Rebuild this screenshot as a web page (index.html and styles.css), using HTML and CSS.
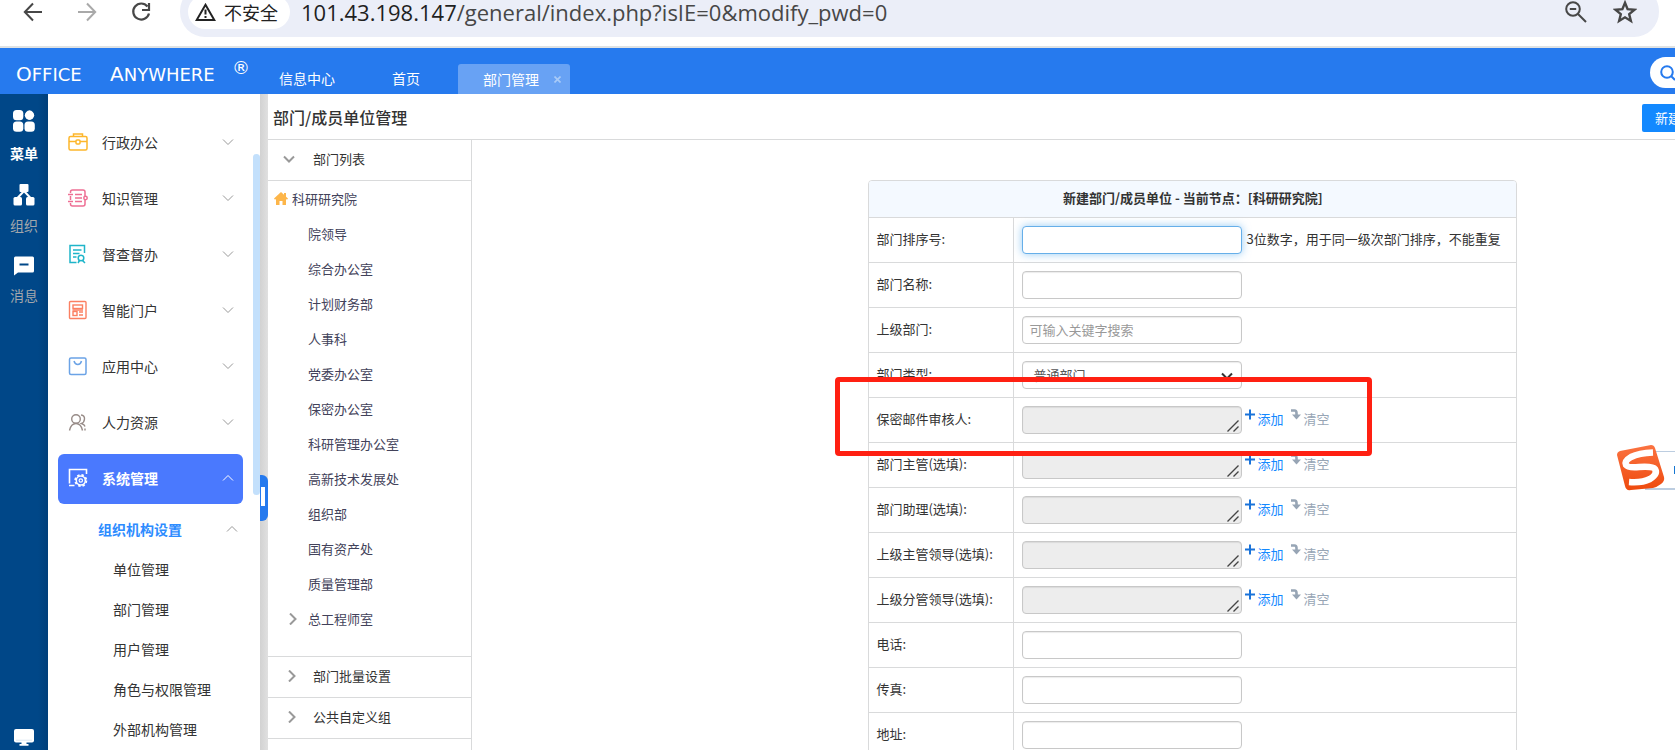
FILE: index.html
```html
<!DOCTYPE html>
<html lang="zh-CN">
<head>
<meta charset="utf-8">
<title>部门/成员单位管理</title>
<link rel="stylesheet" href="styles.css">
</head>
<body>
<svg class="defs" width="0" height="0" aria-hidden="true">
  <symbol id="down" viewBox="0 0 12 12"><path d="M1 3.5 6 8.5 11 3.5" fill="none" stroke="currentColor"/></symbol>
  <symbol id="up" viewBox="0 0 12 12"><path d="M1 8.500 6 3.500 11 8.500" fill="none" stroke="currentColor"/></symbol>
  <symbol id="right" viewBox="0 0 12 12"><path d="M3 .5 8.500 6 3 11.500" fill="none" stroke="currentColor"/></symbol>
  <symbol id="grip" viewBox="0 0 12 12"><path d="M.5 11.500 11.500 .5M6.500 11.500 11.500 6.500" fill="none" stroke="#444" stroke-width="1.400"/></symbol>
  <symbol id="plus" viewBox="0 0 10 10"><path d="M5 0V10M0 5H10" stroke="#1a73d9" stroke-width="2" fill="none"/></symbol>
  <symbol id="clear" viewBox="0 0 10 11"><path d="M0 1.500H3.500Q5.500 1.500 5.500 4V6" stroke="#97a5b5" stroke-width="2.600" fill="none"/><path d="M1 5.500H10L5.500 10.500Z" fill="#97a5b5"/></symbol>
</svg>

<div class="window">
  <div class="toolbar">
    <button class="nav" aria-label="后退"><svg width="20" height="20" viewBox="0 0 20 20"><path d="M19 10H2M10 1.500 1.800 10 10 18.500" fill="none" stroke="#474747" stroke-width="2"/></svg></button>
    <button class="nav" aria-label="前进"><svg width="20" height="20" viewBox="0 0 20 20"><path d="M1 10H18M10 1.500 18.200 10 10 18.500" fill="none" stroke="#a9a9a9" stroke-width="2"/></svg></button>
    <button class="nav" aria-label="刷新"><svg width="20" height="20" viewBox="0 0 20 20"><path d="M16.500 4.500A8 8 0 1 0 18 11.500M18 1V8H11" fill="none" stroke="#474747" stroke-width="2.200"/></svg></button>
    <div class="omnibox">
      <button class="chip"><svg width="21" height="18" viewBox="0 0 21 18"><path d="M10.500 1.800 19.300 17H1.700Z" fill="none" stroke="#222" stroke-width="2"/><path d="M10.500 6.500V11.500M10.500 13V15" stroke="#222" stroke-width="2"/></svg>不安全</button>
      <span class="url"><b>101.43.198.147</b>/general/index.php?isIE=0&amp;modify_pwd=0</span>
      <button class="tool" aria-label="缩小"><svg width="22" height="22" viewBox="0 0 22 22"><circle cx="8" cy="8" r="6.800" fill="none" stroke="#474747" stroke-width="2"/><path d="M4.800 8H11.200M13 13 21 21" stroke="#474747" stroke-width="2"/></svg></button>
      <button class="tool" aria-label="收藏"><svg width="24" height="24" viewBox="0 0 24 24"><path d="M12 2.800 14.600 9.200 21.500 9.700 16.200 14.200 17.900 21 12 17.300 6.100 21 7.800 14.200 2.500 9.700 9.400 9.200Z" fill="none" stroke="#474747" stroke-width="2.400"/></svg></button>
    </div>
  </div>

  <header class="header">
    <div class="logo"><span class="word"><span class="cap">O</span>FFICE</span><span class="word"><span class="cap">A</span>NYWHERE</span><span class="reg">®</span></div>
    <nav class="tabs">
      <a class="tab" href="#">信息中心</a>
      <a class="tab" href="#">首页</a>
      <a class="tab current" href="#">部门管理<svg class="close" width="7" height="7" viewBox="0 0 7 7"><path d="M.5 .5 6.500 6.500M6.500 .5 .5 6.500" stroke="#a9cbf8" stroke-width="1.600"/></svg></a>
    </nav>
    <button class="search" aria-label="搜索"><svg width="16" height="16" viewBox="0 0 16 16"><circle cx="7" cy="7" r="5.800" fill="none" stroke="#267aee" stroke-width="2"/><path d="M11 11 15 15" stroke="#267aee" stroke-width="2"/></svg></button>
  </header>

  <div class="body">
    <nav class="rail">
      <a class="rail-item on" href="#"><svg width="22" height="22" viewBox="0 0 22 22" fill="#fff"><rect width="10.300" height="10.300" rx="3.500"/><rect x="12.700" y="1.400" width="7.600" height="7.600" rx="2" transform="rotate(45 16.500 5.200)"/><circle cx="16.500" cy="5.200" r="4.600"/><rect y="11.500" width="10.300" height="10.300" rx="3.500"/><rect x="11.500" y="11.500" width="10.300" height="10.300" rx="3.500"/></svg>菜单</a>
      <a class="rail-item" href="#"><svg width="22" height="22" viewBox="0 0 22 22"><path d="M11 7 4.500 14M11 7 17.500 14" stroke="#fff" stroke-width="2"/><g fill="#fff"><rect x="6.500" width="9" height="8" rx="1"/><rect x=".5" y="13" width="8.500" height="8.500" rx="1.500"/><rect x="13" y="13" width="8.500" height="8.500" rx="1.500"/></g></svg>组织</a>
      <a class="rail-item" href="#"><svg width="22" height="20" viewBox="0 0 22 20"><path d="M2.500 .5H19.500Q21 .5 21 2V15Q21 16.500 19.500 16.500H5L1 19.500V2Q1 .5 2.500 .5Z" fill="#fff"/><path d="M6.500 8.500H15.500" stroke="#004788" stroke-width="2"/></svg>消息</a>
      <a class="rail-item last" href="#" aria-label="桌面"><svg width="20" height="17" viewBox="0 0 20 17" fill="#fff"><rect width="20" height="13.500" rx="2"/><path d="M7.500 13H12.500V15H14.500V16.800H5.500V15H7.500Z"/><path d="M2 11.200H18" stroke="#cfdceb" stroke-width=".7"/></svg></a>
    </nav>

    <nav class="menu">
      <div class="menu-list">
        <a class="menu-item" href="#" aria-label="公文"><svg class="mi" viewBox="0 0 20 20"><circle cx="10" cy="10" r="9" fill="#b978e8"/></svg></a>
        <a class="menu-item" href="#"><svg class="mi" viewBox="0 0 20 20" fill="none" stroke="#fdb62b" stroke-width="1.500"><rect x="1" y="4.500" width="18" height="13.500" rx="1.500"/><path d="M5.500 4.500V2H14.500V4.500M1 9.500H8M12 9.500H19"/><rect x="8" y="8" width="4" height="4" rx="1"/></svg>行政办公<svg class="chev"><use href="#down"/></svg></a>
        <a class="menu-item" href="#"><svg class="mi" viewBox="0 0 20 20" fill="none" stroke="#ee6f94" stroke-width="1.500"><path d="M2.500 5V4Q2.500 2 4.500 2H15Q17 2 17 4V8M17 12V16Q17 18 15 18H4.500Q2.500 18 2.500 16V15M2.500 8V12M0 6.500H5M0 13.500H5M7 6.500H14M7 10H14M7 13.500H14"/><circle cx="17.500" cy="10" r="1.700"/></svg>知识管理<svg class="chev"><use href="#down"/></svg></a>
        <a class="menu-item" href="#"><svg class="mi" viewBox="0 0 20 20" fill="none" stroke="#1fb5c9" stroke-width="1.500"><path d="M16.500 9V1.500H2V18.500H8.500M5 6H13.500M5 9.500H11.500M5 13H8.500"/><circle cx="13" cy="14" r="2.800"/><path d="M11.500 16.500 10 19M14.500 16.500 17 19"/></svg>督查督办<svg class="chev"><use href="#down"/></svg></a>
        <a class="menu-item" href="#"><svg class="mi" viewBox="0 0 20 20" fill="none" stroke="#fb8062" stroke-width="1.400"><rect x="1.500" y="1.500" width="16.500" height="17" rx="1"/><rect x="5" y="5" width="9.500" height="3.500"/><rect x="5" y="11.500" width="4" height="4"/><path d="M4.500 10H15M11 12H15M11 15H15"/></svg>智能门户<svg class="chev"><use href="#down"/></svg></a>
        <a class="menu-item" href="#"><svg class="mi" viewBox="0 0 20 20" fill="none" stroke="#6ba3e6" stroke-width="1.500"><rect x="1.500" y="2" width="16.500" height="16.500" rx="1.500"/><path d="M6 5Q7 8.500 9.800 8.500T13.500 5"/></svg>应用中心<svg class="chev"><use href="#down"/></svg></a>
        <a class="menu-item" href="#"><svg class="mi" viewBox="0 0 20 20" fill="none" stroke="#978b87" stroke-width="1.400"><circle cx="8" cy="7" r="4.300"/><path d="M1.500 18.500Q3 11.500 8 11.500T14.500 18.500M13 3Q16.800 3.500 16.500 7T13.500 11.500Q16.500 12.500 17 14.500M17 16.500V18.500"/></svg>人力资源<svg class="chev"><use href="#down"/></svg></a>
        <a class="menu-item active" href="#"><svg class="mi" viewBox="0 0 20 20" fill="none" stroke="#fff" stroke-width="1.600"><path d="M18.500 6V1.500H1.500V15.500M1 17.500H6.500"/><circle cx="12.800" cy="12.500" r="4.500" stroke-width="1.500"/><circle cx="12.800" cy="12.500" r="5.600" stroke-width="1.800" stroke-dasharray="2.400 2"/><circle cx="12.800" cy="12.500" r="1.700" stroke-width="1.200"/></svg>系统管理<svg class="chev"><use href="#up"/></svg></a>
        <a class="group" href="#">组织机构设置<svg class="chev"><use href="#up"/></svg></a>
        <a class="leaf" href="#">单位管理</a>
        <a class="leaf" href="#">部门管理</a>
        <a class="leaf" href="#">用户管理</a>
        <a class="leaf" href="#">角色与权限管理</a>
        <a class="leaf" href="#">外部机构管理</a>
      </div>
      <div class="thumb"></div>
    </nav>
    <div class="splitter"><button class="handle" aria-label="收起菜单"></button></div>

    <main class="main">
      <div class="titlebar"><h1>部门/成员单位管理</h1><button class="create">新建</button></div>
      <div class="content">
        <aside class="depts">
          <button class="fold"><svg><use href="#down"/></svg>部门列表</button>
          <div class="tree">
            <a class="root" href="#"><svg width="14" height="13" viewBox="0 0 14 13"><path d="M7 0 10 2.800V1H12V4.700L14 6.600 13 7.700 12 6.900V13H8.500V9H5.500V13H2V6.900L1 7.700 0 6.600Z" fill="#fdb64a"/></svg>科研研究院</a>
            <a class="node" href="#">院领导</a>
            <a class="node" href="#">综合办公室</a>
            <a class="node" href="#">计划财务部</a>
            <a class="node" href="#">人事科</a>
            <a class="node" href="#">党委办公室</a>
            <a class="node" href="#">保密办公室</a>
            <a class="node" href="#">科研管理办公室</a>
            <a class="node" href="#">高新技术发展处</a>
            <a class="node" href="#">组织部</a>
            <a class="node" href="#">国有资产处</a>
            <a class="node" href="#">质量管理部</a>
            <a class="node parent" href="#"><svg><use href="#right"/></svg>总工程师室</a>
          </div>
          <button class="fold closed"><svg><use href="#right"/></svg>部门批量设置</button>
          <button class="fold closed"><svg><use href="#right"/></svg>公共自定义组</button>
        </aside>
        <section class="pane">
          <form class="sheet">
            <table class="form">
              <colgroup><col class="names"><col></colgroup>
              <thead><tr><th colspan="2">新建部门/成员单位 - 当前节点：[科研研究院]</th></tr></thead>
              <tbody>
                <tr><td class="label"><label for="f1">部门排序号:</label></td><td><div class="field"><input class="box focus" id="f1" type="text"><span class="hint">3位数字，用于同一级次部门排序，不能重复</span></div></td></tr>
                <tr><td class="label"><label for="f2">部门名称:</label></td><td><div class="field"><input class="box" id="f2" type="text"></div></td></tr>
                <tr><td class="label"><label for="f3">上级部门:</label></td><td><div class="field"><input class="box" id="f3" type="text" placeholder="可输入关键字搜索"></div></td></tr>
                <tr><td class="label"><label for="f4">部门类型:</label></td><td><div class="field"><span class="wrap"><select class="box" id="f4"><option>普通部门</option></select><svg class="caret"><use href="#down"/></svg></span></div></td></tr>
                <tr><td class="label"><label for="f5">保密邮件审核人:</label></td><td><div class="field"><span class="wrap"><textarea class="box" id="f5" rows="1" readonly></textarea><svg class="grip"><use href="#grip"/></svg></span><a class="add" href="#"><svg><use href="#plus"/></svg>添加</a><a class="clear" href="#"><svg><use href="#clear"/></svg>清空</a></div></td></tr>
                <tr><td class="label"><label for="f6">部门主管(选填):</label></td><td><div class="field"><span class="wrap"><textarea class="box" id="f6" rows="1" readonly></textarea><svg class="grip"><use href="#grip"/></svg></span><a class="add" href="#"><svg><use href="#plus"/></svg>添加</a><a class="clear" href="#"><svg><use href="#clear"/></svg>清空</a></div></td></tr>
                <tr><td class="label"><label for="f7">部门助理(选填):</label></td><td><div class="field"><span class="wrap"><textarea class="box" id="f7" rows="1" readonly></textarea><svg class="grip"><use href="#grip"/></svg></span><a class="add" href="#"><svg><use href="#plus"/></svg>添加</a><a class="clear" href="#"><svg><use href="#clear"/></svg>清空</a></div></td></tr>
                <tr><td class="label"><label for="f8">上级主管领导(选填):</label></td><td><div class="field"><span class="wrap"><textarea class="box" id="f8" rows="1" readonly></textarea><svg class="grip"><use href="#grip"/></svg></span><a class="add" href="#"><svg><use href="#plus"/></svg>添加</a><a class="clear" href="#"><svg><use href="#clear"/></svg>清空</a></div></td></tr>
                <tr><td class="label"><label for="f9">上级分管领导(选填):</label></td><td><div class="field"><span class="wrap"><textarea class="box" id="f9" rows="1" readonly></textarea><svg class="grip"><use href="#grip"/></svg></span><a class="add" href="#"><svg><use href="#plus"/></svg>添加</a><a class="clear" href="#"><svg><use href="#clear"/></svg>清空</a></div></td></tr>
                <tr><td class="label"><label for="f10">电话:</label></td><td><div class="field"><input class="box" id="f10" type="text"></div></td></tr>
                <tr><td class="label"><label for="f11">传真:</label></td><td><div class="field"><input class="box" id="f11" type="text"></div></td></tr>
                <tr><td class="label"><label for="f12">地址:</label></td><td><div class="field"><input class="box" id="f12" type="text"></div></td></tr>
              </tbody>
            </table>
            <div class="mark"></div>
          </form>
        </section>
      </div>
    </main>
  </div>

  <div class="ime">
    <div class="ime-bar"></div>
    <svg class="ime-logo" width="48" height="46" viewBox="0 0 48 46"><defs><linearGradient id="g" x1="0" y1="0" x2="0" y2="1"><stop offset="0" stop-color="#fb7341"/><stop offset="1" stop-color="#ee4a0e"/></linearGradient></defs><path d="M3 6 34 0Q37 0 38 3L47 32Q48 36 44 39Q40 42 36 43L14 45Q9 46 8 41L0 10Q0 7 3 6Z" fill="url(#g)"/><path d="M36 7.500Q22 8 14 12Q7 16 9 20Q11 23 22 22Q36 21 38 24Q41 29 33 34Q25 38 12 37" fill="none" stroke="#fff" stroke-width="6.500"/></svg>
  </div>
</div>
</body>
</html>
```
FILE: styles.css
```css
* { box-sizing: border-box; }
html, body { height: 100%; margin: 0; }
body {
  overflow: hidden;
  background: #fff;
  color: #333;
  font: 14px/20px "Noto Sans CJK SC", sans-serif;
}
a { color: inherit; text-decoration: none; }
button { border: 0; padding: 0; background: none; font: inherit; color: inherit; }
svg { display: block; flex: none; }
.defs { position: absolute; }

.window { position: relative; display: flex; flex-direction: column; height: 100vh; overflow: hidden; }

/* browser toolbar */
.toolbar {
  display: flex;
  align-items: flex-start;
  height: 48px;
  flex: none;
  padding: 0 16px 0 23px;
  border-bottom: 2px solid #dfe2e3;
}
.nav { margin: 2px 34px 0 0; }
.omnibox {
  flex: 1;
  display: flex;
  align-items: center;
  height: 51px;
  margin: -14px 0 0 -5px;
  padding: 0 22px 0 8px;
  border-radius: 25px;
  background: #ebeef8;
}
.chip {
  display: flex;
  align-items: center;
  gap: 8px;
  height: 34px;
  margin-right: 11px;
  padding: 0 12px 0 7px;
  border-radius: 17px;
  background: #fff;
  color: #222;
  font-size: 18px;
}
.url { flex: 1; color: #474747; font: 22px/30px "Open Sans", sans-serif; }
.url b { color: #1f1f1f; font-weight: 400; }
.tool { margin-left: 26px; }

/* application header */
.header { display: flex; flex: none; height: 46px; background: #267aee; color: #fff; }
.logo {
  display: flex;
  align-items: flex-start;
  width: 250px;
  padding: 14px 0 0 16px;
  font: 18px/24px "DejaVu Sans", sans-serif;
}
.word { width: 94px; }
.word + .word { width: 122px; }
.cap { font-size: 20px; }
.reg { line-height: 12px; }
.tabs { display: flex; align-items: flex-end; }
.tab { height: 30px; padding: 0 28px 0 29px; line-height: 28px; }
.current {
  display: flex;
  align-items: center;
  gap: 15px;
  margin-left: 10px;
  padding: 0 9px 0 25px;
  border-radius: 3px 3px 0 0;
  background: #68a2f4;
}
.search {
  width: 25px;
  height: 31px;
  margin: 9px 0 0 auto;
  padding-left: 10px;
  border-radius: 16px 0 0 16px;
  background: #fff;
  overflow: hidden;
}

.body { display: flex; flex: 1; min-height: 0; }

/* icon rail */
.rail {
  display: flex;
  flex-direction: column;
  align-items: center;
  gap: 21px;
  width: 48px;
  padding: 16px 0 4px;
  background: linear-gradient(to right, #004788 38px, #003f7a);
  color: #a3a7ac;
}
.rail-item { display: flex; flex-direction: column; align-items: center; gap: 9px; }
.on { gap: 11px; color: #fff; font-weight: 700; }
.last { margin-top: auto; }

/* side menu */
.menu { position: relative; width: 212px; overflow: hidden; background: #fff; }
.menu-list { margin-top: -32px; padding: 0 17px 0 10px; }
.menu-item {
  display: flex;
  align-items: center;
  height: 50px;
  margin-bottom: 6px;
  padding: 0 9px 2px 10px;
  border-radius: 6px;
}
.menu-item:first-child { margin-top: -2px; }
.mi { width: 20px; height: 20px; margin-right: 14px; }
.menu-item:first-child .mi { margin-bottom: 12px; }
.chev { width: 12px; height: 12px; margin-left: auto; color: #999; }
.active { background: #4a79fe; color: #fff; font-weight: 700; }
.active .chev { color: #fff; }
.group {
  display: flex;
  align-items: center;
  height: 40px;
  padding: 0 5px 2px 40px;
  color: #2d8cff;
  font-weight: 700;
}
.leaf { display: block; height: 40px; padding-left: 55px; line-height: 38px; }
.thumb {
  position: absolute;
  top: 60px;
  right: 0;
  width: 7px;
  height: 341px;
  border-radius: 4px;
  background: #c3e0fc;
}
.splitter {
  display: flex;
  align-items: center;
  width: 8px;
  padding-top: 151px;
  background: linear-gradient(to right, #d2d2d2, #e0e0e0);
}
.handle {
  width: 8px;
  height: 46px;
  border-radius: 0 6px 6px 0;
  background: linear-gradient(#fff, #fff) 1px 12px / 4px 19px no-repeat #267aee;
}

/* page */
.main { display: flex; flex-direction: column; flex: 1; min-width: 0; }
.titlebar {
  display: flex;
  align-items: center;
  height: 46px;
  flex: none;
  padding-left: 5px;
  border-bottom: 1px solid #d9dadb;
}
h1 { margin: 0; font-size: 16px; font-weight: 500; line-height: 24px; }
.create {
  width: 33px;
  height: 28px;
  margin: 2px 0 0 auto;
  padding-left: 13px;
  border-radius: 2px 0 0 2px;
  background: #1389ff;
  color: #fff;
  font-size: 13px;
  text-align: left;
  white-space: nowrap;
  overflow: hidden;
}
.content { display: flex; flex: 1; min-height: 0; font-size: 13px; }
.depts { width: 204px; flex: none; border-right: 1px solid #d9dadb; overflow: hidden; }
.fold {
  display: flex;
  align-items: center;
  gap: 18px;
  width: 100%;
  height: 41px;
  padding: 0 0 2px 15px;
  border-bottom: 1px solid #d9dadb;
}
.closed { gap: 15px; padding-left: 18px; }
.fold svg, .parent svg { width: 12px; height: 12px; color: #999; stroke-width: 2; }
.tree { height: 476px; border-bottom: 1px solid #d9dadb; color: #42425a; }
.root { display: flex; align-items: center; gap: 4px; height: 35px; padding-left: 6px; }
.node { display: flex; align-items: center; height: 35px; padding-left: 40px; }
.parent { gap: 9px; padding-left: 19px; }

.pane { flex: 1; min-width: 0; overflow: hidden; }
.sheet { position: relative; width: 120%; padding: 40px 2px 0 0; }
.form {
  width: 45%;
  margin: 0 auto;
  border: 1px solid #d9dadb;
  border-radius: 4px;
  border-spacing: 0;
  table-layout: fixed;
  overflow: hidden;
}
.names { width: 144px; }
th { height: 36px; padding: 0 0 2px; background: #f4f9ff; font-weight: 700; }
td { height: 45px; padding: 0 0 0 8px; border-top: 1px solid #d9dadb; }
.label { padding: 0 0 2px 7px; }
.label + td { border-left: 1px solid #d9dadb; }
.field { display: flex; align-items: center; }
.box {
  display: block;
  width: 220px;
  height: 28px;
  flex: none;
  padding: 0 6px 2px;
  border: 1px solid #c8c8c8;
  border-radius: 4px;
  background: #fff;
  box-shadow: inset 0 1px 1px rgba(0, 0, 0, .08);
  color: #555;
  font: 13px/20px "Noto Sans CJK SC", sans-serif;
  outline: 0;
}
.box::placeholder { color: #999; }
.focus { border-color: #66afe9; box-shadow: 0 0 8px rgba(82, 168, 236, .6); }
select.box { padding: 0 10px; appearance: none; }
textarea.box { background: #ededed; resize: none; overflow: hidden; }
.wrap { position: relative; }
.caret { position: absolute; top: 9px; right: 9px; width: 12px; height: 12px; color: #333; stroke-width: 2; }
.grip { position: absolute; right: 3px; bottom: 2px; width: 12px; height: 12px; }
.hint { margin-left: 4px; padding-bottom: 2px; white-space: nowrap; }
.add, .clear { display: flex; gap: 2px; padding-bottom: 2px; }
.add { margin-left: 3px; color: #1389ff; }
.clear { margin-left: 8px; color: #97a5b5; }
.add svg, .clear svg { width: 10px; height: 11px; }

/* highlight frame over the form */
.mark {
  position: absolute;
  top: 237px;
  left: 363px;
  width: 537px;
  height: 79px;
  border: 5px solid #ff2012;
  border-radius: 4px;
}

/* input-method badge */
.ime { position: absolute; top: 445px; right: 0; width: 58px; height: 46px; }
.ime-bar {
  position: absolute;
  top: 6px;
  right: 0;
  width: 30px;
  height: 39px;
  border: solid #bccde0;
  border-width: 1px 0 2px;
  background: linear-gradient(#1677d2, #1677d2) 100% 14px / 1px 8px no-repeat #fff;
}
.ime-logo { position: absolute; top: 0; left: 0; }
```
